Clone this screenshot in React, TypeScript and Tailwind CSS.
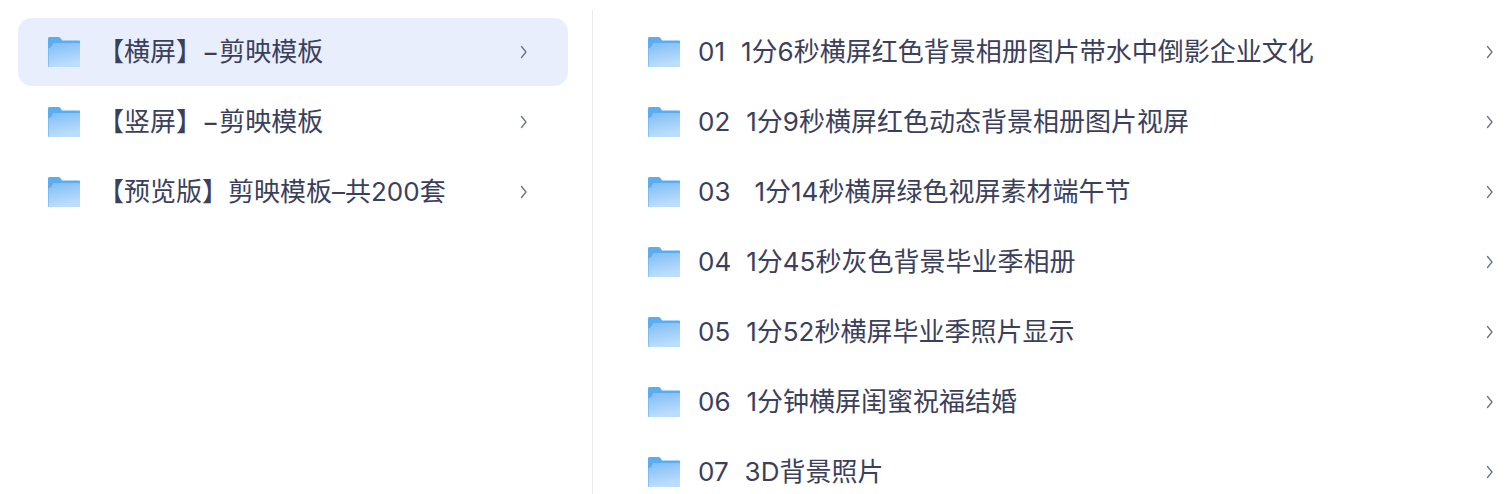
const LEFT_ITEMS = ['【横屏】−剪映模板', '【竖屏】−剪映模板', '【预览版】剪映模板–共200套'];

const RIGHT_ITEMS = [
  ['01', '1分6秒横屏红色背景相册图片带水中倒影企业文化', 'ml-[16px]'],
  ['02', '1分9秒横屏红色动态背景相册图片视屏', 'ml-[16px]'],
  ['03', '1分14秒横屏绿色视屏素材端午节', 'ml-[24px]'],
  ['04', '1分45秒灰色背景毕业季相册', 'ml-[15px]'],
  ['05', '1分52秒横屏毕业季照片显示', 'ml-[16px]'],
  ['06', '1分钟横屏闺蜜祝福结婚', 'ml-[16px]'],
  ['07', '3D背景照片', 'ml-[16px]'],
];

function FolderIcon({ id }: { id: string }) {
  return (
    <svg width="32" height="30" viewBox="0 0 32 30" className="shrink-0">
      <defs>
        <linearGradient id={id} x1="0" y1="0" x2="0.25" y2="1">
          <stop offset="0" stopColor="#7fbdf5" />
          <stop offset="1" stopColor="#bcdefc" />
        </linearGradient>
      </defs>
      <path
        d="M0 1.500C0 .7.7 0 1.500 0h9c.8 0 1.400.3 2 1l1.500 2.500H31c.6 0 1 .4 1 1V29c0 .6-.4 1-1 1H1c-.6 0-1-.4-1-1V1.500z"
        fill="#5badf0"
      />
      <path d="M5 6h26c.6 0 1 .4 1 1v22c0 .6-.4 1-1 1H1.500c-.6 0-1-.4-1-1V11c2.500 0 3.500-2 4.500-5z" fill={`url(#${id})`} />
    </svg>
  );
}

function Chevron() {
  return (
    <svg width="8" height="14" viewBox="0 0 8 14" fill="none">
      <path d="M1.500 1.500 6 7l-4.500 5.500" stroke="#6b7086" strokeWidth="1.300" strokeLinecap="round" strokeLinejoin="round" />
    </svg>
  );
}

export default function App() {
  return (
    <div
      className="flex h-[494px] w-[1510px] overflow-hidden bg-white text-[26px] text-[#3b3f5c]"
      style={{ fontFamily: 'Inter, "Noto Sans CJK SC", sans-serif' }}
    >
      <div className="w-[568px] shrink-0 pl-[18px] pt-[18px]">
        {LEFT_ITEMS.map((label, i) => (
          <div
            key={label}
            className={`mb-[2px] flex h-[68px] items-center rounded-[14px] pl-[30px] pr-[40px] ${i === 0 ? 'bg-[#e9eefd]' : ''}`}
          >
            <FolderIcon id={`left-${i}`} />
            <span className="ml-[18px] flex-1 whitespace-nowrap pb-[2px]">{label}</span>
            <Chevron />
          </div>
        ))}
      </div>

      <div className="ml-[24px] mt-[10px] w-px shrink-0 bg-[#e9eaee]" />

      <div className="flex-1 pl-[55px] pr-[16px] pt-[17px]">
        {RIGHT_ITEMS.map(([num, label, gap], i) => (
          <div key={num} className="flex h-[70px] items-center">
            <FolderIcon id={`right-${i}`} />
            <span className="ml-[18px] flex-1 whitespace-nowrap pb-[2px]">
              {num}
              <span className={gap}>{label}</span>
            </span>
            <Chevron />
          </div>
        ))}
      </div>
    </div>
  );
}
